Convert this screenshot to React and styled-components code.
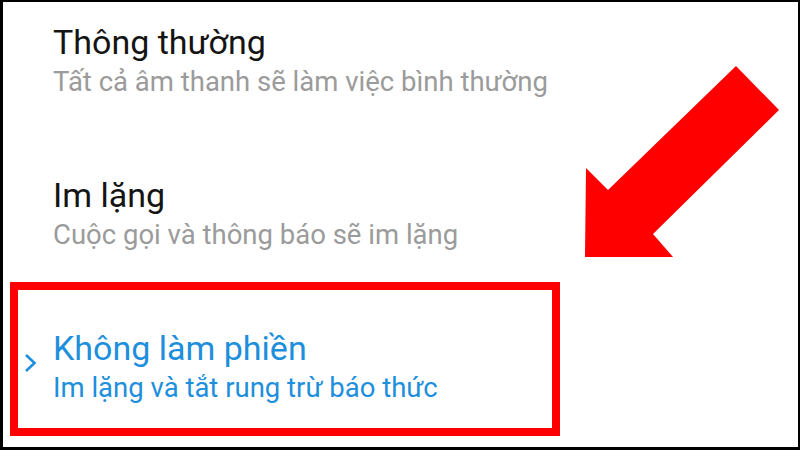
import React from 'react';
import styled, { createGlobalStyle } from 'styled-components';

const GlobalStyle = createGlobalStyle`
  html, body {
    margin: 0;
    padding: 0;
    background: #fff;
  }
  body {
    font-family: Roboto, "Noto Sans", "Liberation Sans", sans-serif;
  }
`;

const Frame = styled.div`
  position: relative;
  width: 800px;
  height: 450px;
  box-sizing: border-box;
  border: 2px solid #000;
  border-left-width: 3px;
  border-bottom-width: 3px;
  background: #fff;
  overflow: hidden;
`;

const List = styled.div`
  display: flex;
  flex-direction: column;
`;

const Item = styled.div`
  display: flex;
  flex-direction: column;
  padding-top: ${(p) => p.$top}px;
  padding-left: 50px;
`;

const Highlight = styled.div`
  display: flex;
  align-items: center;
  gap: 16px;
  width: 550px;
  box-sizing: border-box;
  margin: 27px 0 0 7px;
  padding: 38px 0 20px 6px;
  border: 8px solid #ff0000;
`;

const TextBlock = styled.div`
  display: flex;
  flex-direction: column;
`;

const Title = styled.div`
  font-size: 34px;
  line-height: 40px;
  color: ${(p) => (p.$active ? '#1d8fdc' : '#141414')};
  white-space: nowrap;
`;

const Subtitle = styled.div`
  font-size: 27.5px;
  line-height: 40px;
  color: ${(p) => (p.$active ? '#1d8fdc' : '#9b9b9b')};
  white-space: nowrap;
`;

const Chevron = styled.svg`
  flex: none;
  display: block;
  width: 13px;
  height: 20px;
  margin-top: -10px;
`;

const Pointer = styled.svg`
  position: absolute;
  left: 0;
  top: 0;
  width: 800px;
  height: 450px;
  pointer-events: none;
`;

const modes = [
  { title: 'Thông thường', sub: 'Tất cả âm thanh sẽ làm việc bình thường', top: 20 },
  { title: 'Im lặng', sub: 'Cuộc gọi và thông báo sẽ im lặng', top: 73 },
];

export default function App() {
  return (
    <>
      <GlobalStyle />
      <Frame>
        <List>
          {modes.map((m) => (
            <Item key={m.title} $top={m.top}>
              <Title>{m.title}</Title>
              <Subtitle>{m.sub}</Subtitle>
            </Item>
          ))}
          <Highlight>
            <Chevron viewBox="0 0 13 20">
              <path d="M2 2 L10.5 10 L2 18" fill="none" stroke="#1d8fdc" strokeWidth="2.6" />
            </Chevron>
            <TextBlock>
              <Title $active>Không làm phiền</Title>
              <Subtitle $active>Im lặng và tắt rung trừ báo thức</Subtitle>
            </TextBlock>
          </Highlight>
        </List>
        <Pointer viewBox="0 0 800 450">
          <polygon
            transform="translate(-3 -2)"
            points="736,66 779,110 653,234 673,257 585,257 586,168 608,190"
            fill="#ff0000"
          />
        </Pointer>
      </Frame>
    </>
  );
}
